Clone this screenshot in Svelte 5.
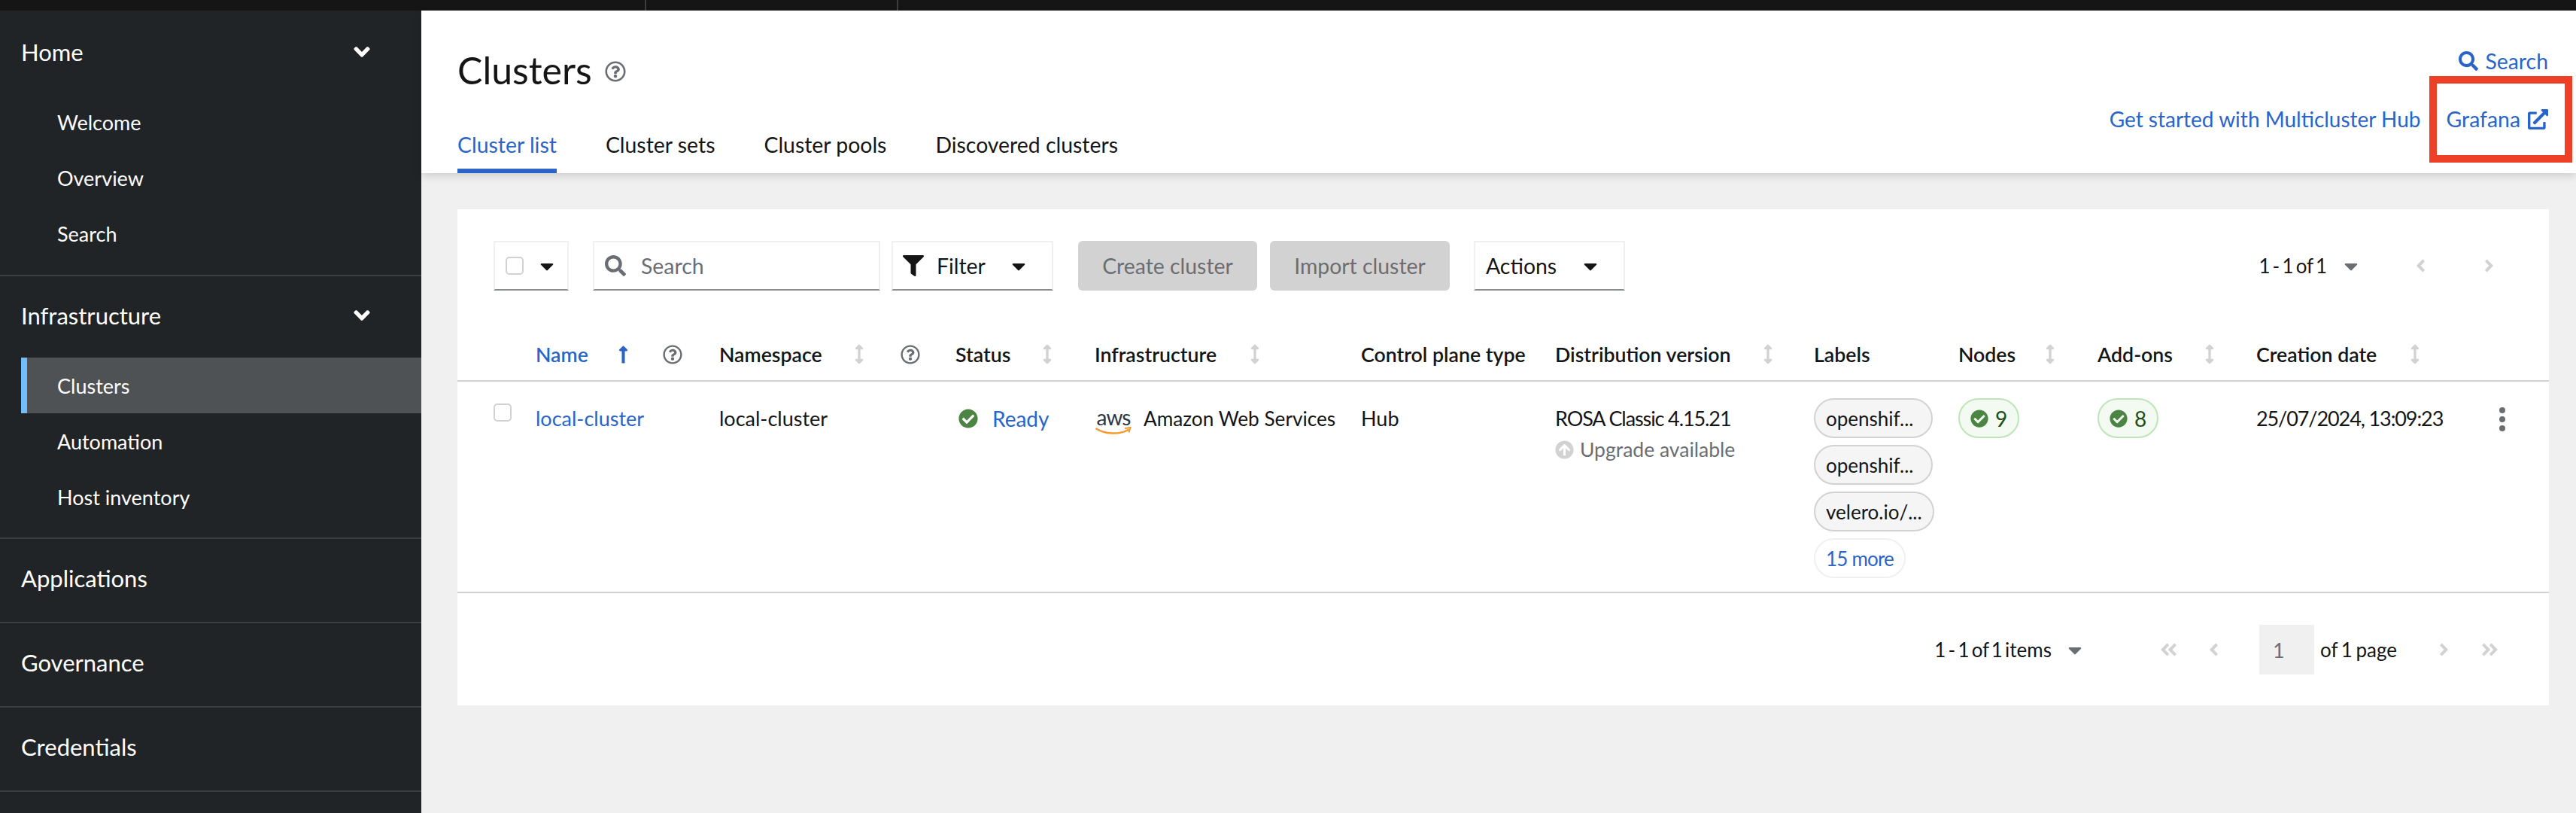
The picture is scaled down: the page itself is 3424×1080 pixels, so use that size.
<script>
  const paths = {
    search: ['0 0 512 512', 'M505 442.7L405.3 343c-4.5-4.5-10.6-7-17-7H372c27.6-35.3 44-79.7 44-128C416 93.1 322.9 0 208 0S0 93.1 0 208s93.1 208 208 208c48.3 0 92.7-16.4 128-44v16.3c0 6.4 2.5 12.5 7 17l99.7 99.7c9.4 9.4 24.6 9.4 33.9 0l28.3-28.3c9.4-9.4 9.4-24.6.1-34zM208 336c-70.7 0-128-57.2-128-128 0-70.7 57.2-128 128-128 70.7 0 128 57.2 128 128 0 70.7-57.2 128-128 128z'],
    filter: ['0 0 512 512', 'M487.976 0H24.028C2.71 0-8.047 25.866 7.058 40.971L192 225.941V432c0 7.831 3.821 15.17 10.237 19.662l80 55.98C298.02 518.69 320 507.493 320 487.98V225.941l184.947-184.97C520.021 25.896 509.338 0 487.976 0z'],
    check: ['0 0 512 512', 'M504 256c0 136.967-111.033 248-248 248S8 392.967 8 256 119.033 8 256 8s248 111.033 248 248zM227.314 387.314l184-184c6.248-6.248 6.248-16.379 0-22.627l-22.627-22.627c-6.248-6.249-16.379-6.249-22.628 0L216 308.118l-70.059-70.059c-6.248-6.248-16.379-6.248-22.628 0l-22.627 22.627c-6.248 6.248-6.248 16.379 0 22.627l104 104c6.249 6.249 16.379 6.249 22.628.001z'],
    external: ['0 0 512 512', 'M432,320H400a16,16,0,0,0-16,16V448H64V128H208a16,16,0,0,0,16-16V80a16,16,0,0,0-16-16H48A48,48,0,0,0,0,112V464a48,48,0,0,0,48,48H400a48,48,0,0,0,48-48V336A16,16,0,0,0,432,320ZM488,0h-128c-21.37,0-32.05,25.91-17,41l35.73,35.73L135,320.37a24,24,0,0,0,0,34L157.67,377a24,24,0,0,0,34,0L435.28,133.32,471,169c15,15,41,4.5,41-17V24A24,24,0,0,0,488,0Z'],
    help: ['0 0 512 512', 'M256 8C119.043 8 8 119.083 8 256c0 136.997 111.043 248 248 248s248-111.003 248-248C504 119.083 392.957 8 256 8zm0 448c-110.532 0-200-89.431-200-200 0-110.495 89.472-200 200-200 110.491 0 200 89.471 200 200 0 110.53-89.431 200-200 200zm107.244-255.2c0 67.052-72.421 68.084-72.421 92.863V300c0 6.627-5.373 12-12 12h-45.647c-6.627 0-12-5.373-12-12v-8.659c0-35.745 27.1-50.034 47.579-61.516 17.561-9.845 28.324-16.541 28.324-29.579 0-17.246-21.999-28.693-39.784-28.693-23.189 0-33.894 10.977-48.942 29.969-4.057 5.12-11.46 6.071-16.666 2.124l-27.824-21.098c-5.107-3.872-6.251-11.066-2.644-16.363C184.846 131.491 214.94 112 261.794 112c49.071 0 101.45 38.304 101.45 88.8zM298 368c0 23.159-18.841 42-42 42s-42-18.841-42-42 18.841-42 42-42 42 18.841 42 42z'],
    angleDown: ['0 0 320 512', 'M143 352.3L7 216.3c-9.4-9.4-9.4-24.6 0-33.9l22.6-22.6c9.4-9.4 24.6-9.4 33.9 0l96.4 96.4 96.4-96.4c9.4-9.4 24.6-9.4 33.9 0l22.6 22.6c9.4 9.4 9.4 24.6 0 33.9l-136 136c-9.2 9.4-24.4 9.4-33.8 0z'],
    angleLeft: ['0 0 256 512', 'M31.7 239l136-136c9.4-9.4 24.6-9.4 33.9 0l22.6 22.6c9.4 9.4 9.4 24.6 0 33.9L127.9 256l96.4 96.4c9.4 9.4 9.4 24.6 0 33.9L201.7 409c-9.4 9.4-24.6 9.4-33.9 0l-136-136c-9.5-9.4-9.5-24.6-.1-34z'],
    anglesLeft: ['0 0 448 512', 'M223.7 239l136-136c9.4-9.4 24.6-9.4 33.9 0l22.6 22.6c9.4 9.4 9.4 24.6 0 33.9L319.9 256l96.4 96.4c9.4 9.4 9.4 24.6 0 33.9L393.7 409c-9.4 9.4-24.6 9.4-33.9 0l-136-136c-9.5-9.4-9.5-24.6-.1-34zm-192 34l136 136c9.4 9.4 24.6 9.4 33.9 0l22.6-22.6c9.4-9.4 9.4-24.6 0-33.9L127.9 256l96.4-96.4c9.4-9.4 9.4-24.6 0-33.9L201.7 103c-9.4-9.4-24.6-9.4-33.9 0l-136 136c-9.5 9.4-9.5 24.6-.1 34z'],
    caret: ['0 0 320 512', 'M31.3 192h257.3c17.8 0 26.7 21.5 14.1 34.1L174.1 354.8c-7.8 7.8-20.5 7.8-28.3 0L17.2 226.1C4.6 213.5 13.5 192 31.3 192z'],
    sortBoth: ['0 0 272 512', 'M214.059 377.941H168V134.059h46.059c21.382 0 32.09-25.851 16.971-40.971L152.971 15.029c-9.373-9.373-24.569-9.373-33.941 0L40.971 93.088c-15.119 15.119-4.411 40.971 16.971 40.971H104v243.882H57.941c-21.382 0-32.09 25.851-16.971 40.971l78.059 78.059c9.373 9.373 24.569 9.373 33.941 0l78.059-78.059c15.119-15.12 4.411-40.971-16.97-40.971z'],
    sortUp: ['0 0 256 512', 'M88 166.059V468c0 6.627 5.373 12 12 12h56c6.627 0 12-5.373 12-12V166.059h46.059c21.382 0 32.09-25.851 16.971-40.971l-86.059-86.059c-9.373-9.373-24.569-9.373-33.941 0l-86.059 86.059c-15.119 15.119-4.411 40.971 16.971 40.971H88z'],
    upgrade: ['0 0 512 512', 'M8 256C8 119 119 8 256 8s248 111 248 248-111 248-248 248S8 393 8 256zm143.6 28.9l72.4-75.5V392c0 13.3 10.7 24 24 24h16c13.3 0 24-10.7 24-24V209.4l72.4 75.5c9.3 9.7 24.8 9.9 34.3.4l10.9-11c9.4-9.4 9.4-24.6 0-33.9L273 107.7c-9.4-9.4-24.6-9.4-33.9 0L106.3 240.4c-9.4 9.4-9.4 24.6 0 33.9l10.9 11c9.6 9.5 25.1 9.3 34.4-.4z']
  };

  const nav = [
    { title: 'Home', items: ['Welcome', 'Overview', 'Search'] },
    { title: 'Infrastructure', items: ['Clusters', 'Automation', 'Host inventory'] },
    { title: 'Applications' },
    { title: 'Governance' },
    { title: 'Credentials' }
  ];
  const tabs = ['Cluster list', 'Cluster sets', 'Cluster pools', 'Discovered clusters'];
  const labels = ['openshif...', 'openshif...', 'velero.io/...'];
</script>

{#snippet icon(name, cls)}
  <svg class="icon {cls}" viewBox={paths[name][0]} fill="currentColor" aria-hidden="true"><path d={paths[name][1]} /></svg>
{/snippet}

<div class="page">
  <div class="topbar"><span class="seg first"></span><span class="seg second"></span></div>
  <div class="shell">
    <nav class="sidebar">
      {#each nav as section}
        <div class="section">
          <div class="section-title">
            <span>{section.title}</span>
            {#if section.items}{@render icon('angleDown', 'chev')}{/if}
          </div>
          {#if section.items}
            <ul>
              {#each section.items as item}
                <li class:active={item === 'Clusters'}>{item}</li>
              {/each}
            </ul>
          {/if}
        </div>
      {/each}
    </nav>

    <main>
      <header>
        <div class="head-left">
          <h1>Clusters {@render icon('help', 'title-help')}</h1>
          <div class="tabs">
            {#each tabs as tab, i}
              <span class="tab" class:current={i === 0}>{tab}</span>
            {/each}
          </div>
        </div>
        <div class="head-right">
          <span class="link search-link">{@render icon('search', 'link-search')}Search</span>
          <div class="link-row">
            <span class="link started">Get started with Multicluster Hub</span>
            <span class="link grafana">Grafana{@render icon('external', 'link-ext')}</span>
          </div>
        </div>
        <div class="callout"></div>
      </header>

      <div class="content">
        <section class="card">
          <div class="toolbar">
            <div class="control bulk"><span class="box"></span>{@render icon('caret', 'caret')}</div>
            <div class="control search">{@render icon('search', 'search-ico')}<span>Search</span></div>
            <div class="control filter">{@render icon('filter', 'filter-ico')}<span>Filter</span>{@render icon('caret', 'caret')}</div>
            <div class="btn create">Create cluster</div>
            <div class="btn import">Import cluster</div>
            <div class="control actions"><span>Actions</span>{@render icon('caret', 'caret')}</div>
            <div class="pager-top">
              <span class="tight">1 - 1 of 1</span>
              {@render icon('caret', 'caret muted')}
              {@render icon('angleLeft', 'pg prev')}
              {@render icon('angleLeft', 'pg flip next')}
            </div>
          </div>

          <div class="row head">
            <div></div>
            <div class="th sorted">Name{@render icon('sortUp', 'sort-up')}<span class="help-name">{@render icon('help', 'th-help')}</span></div>
            <div class="th">Namespace{@render icon('sortBoth', 'sort')}{@render icon('help', 'th-help ns-help')}</div>
            <div class="th">Status{@render icon('sortBoth', 'sort')}</div>
            <div class="th">Infrastructure{@render icon('sortBoth', 'sort wide')}</div>
            <div class="th">Control plane type</div>
            <div class="th">Distribution version{@render icon('sortBoth', 'sort')}</div>
            <div class="th">Labels</div>
            <div class="th">Nodes{@render icon('sortBoth', 'sort nodes')}</div>
            <div class="th">Add-ons{@render icon('sortBoth', 'sort')}</div>
            <div class="th">Creation date{@render icon('sortBoth', 'sort wide')}</div>
            <div></div>
          </div>

          <div class="row body">
            <div class="cell-box"><span class="box"></span></div>
            <div class="td link">local-cluster</div>
            <div class="td">local-cluster</div>
            <div class="td status">{@render icon('check', 'ok')}<span class="link">Ready</span></div>
            <div class="td infra">
              <div class="aws">
                <span>aws</span>
                <svg viewBox="0 0 50 12" aria-hidden="true">
                  <path d="M1.500 2c12 8 31 9 44 1.500" fill="none" stroke="#f49a2b" stroke-width="2.500" />
                  <path d="M40 2l7.500-1-2 6.500" fill="none" stroke="#f49a2b" stroke-width="2" />
                </svg>
              </div>
              <span>Amazon Web Services</span>
            </div>
            <div class="td">Hub</div>
            <div class="td">
              <div class="digits">ROSA Classic 4.15.21</div>
              <div class="upgrade">{@render icon('upgrade', 'up')}Upgrade available</div>
            </div>
            <div class="pills">
              {#each labels as label}
                <span class="pill">{label}</span>
              {/each}
              <span class="pill more">15 more</span>
            </div>
            <div class="pills"><span class="pill good">{@render icon('check', 'good-ico')}9</span></div>
            <div class="pills"><span class="pill good">{@render icon('check', 'good-ico')}8</span></div>
            <div class="td digits">25/07/2024, 13:09:23</div>
            <div class="kebab"><i></i><i></i><i></i></div>
          </div>

          <div class="pager-bottom">
            <span class="count tight">1 - 1 of 1 items</span>
            {@render icon('caret', 'caret muted')}
            {@render icon('anglesLeft', 'pg first')}
            {@render icon('angleLeft', 'pg back')}
            <span class="page-input">1</span>
            <span class="of">of 1 page</span>
            {@render icon('angleLeft', 'pg flip fwd')}
            {@render icon('anglesLeft', 'pg flip last')}
          </div>
        </section>
      </div>
    </main>
  </div>
</div>

<style>
  :global(body) {
    margin: 0;
    background: #f0f0f0;
  }

  .page {
    width: 3424px;
    height: 1080px;
    overflow: hidden;
    display: flex;
    flex-direction: column;
    font-family: Lato, "Liberation Sans", sans-serif;
    font-size: 27px;
    color: #151515;
  }

  .icon {
    display: block;
    flex: none;
  }

  .topbar {
    height: 14px;
    flex: none;
    display: flex;
    background: #151515;
  }

  .seg {
    border-right: 2px solid #3c3f42;
  }

  .seg.first {
    width: 753px;
  }

  .seg.second {
    width: 333px;
  }

  .shell {
    flex: 1;
    display: flex;
    min-height: 0;
  }

  /* sidebar */
  .sidebar {
    width: 560px;
    flex: none;
    padding-top: 3px;
    background: #212427;
    color: #fff;
  }

  .section {
    padding-bottom: 6px;
    border-bottom: 2px solid #3c3f42;
  }

  .section:nth-child(2) {
    padding-bottom: 17px;
  }

  .section:first-child {
    padding-bottom: 18px;
  }

  .section-title {
    height: 104px;
    padding: 0 68px 0 28px;
    display: flex;
    align-items: center;
    justify-content: space-between;
    font-size: 31px;
  }

  .chev {
    width: 22px;
    height: 34px;
  }

  ul {
    list-style: none;
    margin: 4px 0 0;
    padding: 0;
  }

  li {
    height: 74px;
    margin-left: 28px;
    padding-left: 48px;
    display: flex;
    align-items: center;
  }

  li.active {
    padding-left: 40px;
    background: #4f5255;
    border-left: 8px solid #73bcf7;
  }

  /* header */
  main {
    flex: 1;
    min-width: 0;
    display: flex;
    flex-direction: column;
  }

  header {
    position: relative;
    z-index: 1;
    height: 216px;
    flex: none;
    display: flex;
    justify-content: space-between;
    padding: 0 37px 0 48px;
    background: #fff;
    box-shadow: 0 4px 10px rgba(3, 3, 3, 0.14);
    font-size: 28.4px;
  }

  h1 {
    display: flex;
    align-items: center;
    gap: 17px;
    margin: 50px 0 32px;
    height: 58px;
    font-size: 50px;
    font-weight: 400;
  }

  .title-help {
    width: 28px;
    height: 28px;
    color: #6a6e73;
    margin-top: 4px;
  }

  .tabs {
    display: flex;
    gap: 65px;
  }

  .tab {
    height: 76px;
    box-sizing: border-box;
    display: flex;
    align-items: center;
    border-bottom: 6px solid transparent;
    padding-top: 6px;
  }

  .tab.current {
    color: #2b64c8;
    border-bottom-color: #2b64c8;
  }

  .link {
    color: #2b64c8;
  }

  .head-right {
    display: flex;
    flex-direction: column;
    align-items: flex-end;
    padding-top: 47px;
    gap: 37px;
  }

  .search-link {
    height: 40px;
    display: flex;
    align-items: center;
    gap: 9px;
  }

  .link-search {
    width: 26px;
    height: 26px;
  }

  .link-row {
    height: 40px;
    display: flex;
    align-items: center;
    gap: 34px;
  }

  .started {
    font-size: 28px;
  }

  .grafana {
    display: flex;
    align-items: center;
    gap: 10px;
  }

  .link-ext {
    width: 27px;
    height: 27px;
  }

  .callout {
    position: absolute;
    right: 5px;
    top: 87px;
    width: 190px;
    height: 115px;
    box-sizing: border-box;
    border: 10px solid #ee4026;
  }

  /* card */
  .content {
    flex: 1;
    padding: 48px 36px 0 48px;
    background: #f0f0f0;
  }

  .card {
    height: 659px;
    background: #fff;
  }

  .toolbar {
    display: flex;
    align-items: stretch;
    height: 66px;
    padding: 42px 73px 0 48px;
    font-size: 28.4px;
  }

  .control {
    box-sizing: border-box;
    display: flex;
    align-items: center;
    border: 2px solid #f0f0f0;
    border-bottom-color: #8a8d90;
  }

  .box {
    display: block;
    box-sizing: border-box;
    width: 24px;
    height: 24px;
    border: 2px solid #d2d2d2;
    border-radius: 5px;
    background: #fff;
  }

  .caret {
    width: 18px;
    height: 29px;
  }

  .muted {
    color: #6a6e73;
  }

  .bulk {
    width: 100px;
    padding-left: 14px;
    gap: 22px;
  }

  .search {
    width: 382px;
    margin-left: 32px;
    padding-left: 14px;
    gap: 20px;
    color: #6a6e73;
  }

  .search-ico {
    width: 28px;
    height: 28px;
  }

  .filter {
    width: 215px;
    margin-left: 15px;
    padding-left: 13px;
  }

  .filter-ico {
    width: 28px;
    height: 28px;
  }

  .filter span {
    width: 100px;
    margin-left: 17px;
  }

  .btn {
    margin-left: 17px;
    display: flex;
    align-items: center;
    justify-content: center;
    background: #d2d2d2;
    color: #6a6e73;
    border-radius: 6px;
  }

  .create {
    width: 238px;
    margin-left: 33px;
  }

  .import {
    width: 239px;
  }

  .actions {
    width: 201px;
    margin-left: 32px;
    padding-left: 14px;
  }

  .actions span {
    width: 130px;
  }

  .pager-top {
    margin-left: auto;
    display: flex;
    align-items: center;
    font-size: 26px;
  }

  .tight {
    font-size: 26px;
    word-spacing: -3.5px;
  }

  .pager-top .caret {
    margin-left: 23px;
  }

  .pg {
    color: #d2d2d2;
    height: 26px;
    width: 13px;
  }

  .flip {
    transform: scaleX(-1);
  }

  .prev {
    margin-left: 77px;
  }

  .next {
    margin-left: 78px;
  }

  /* table */
  .row {
    display: grid;
    grid-template-columns: 56px 244px 314px 185px 354px 258px 344px 192px 185px 211px 301px 1fr;
    padding-left: 48px;
  }

  .head {
    box-sizing: border-box;
    height: 121px;
    padding-top: 50px;
    border-bottom: 2px solid #d2d2d2;
    align-items: center;
  }

  .th {
    display: flex;
    align-items: center;
    font-size: 26.7px;
    font-weight: 600;
    white-space: nowrap;
  }

  .sorted {
    color: #2b64c8;
  }

  .sort-up {
    width: 13px;
    height: 26px;
    margin-left: 40px;
  }

  .help-name {
    margin-left: 46px;
    color: #151515;
  }

  .th-help {
    width: 26px;
    height: 26px;
    color: #6a6e73;
  }

  .ns-help {
    margin-left: 48px;
  }

  .sort {
    width: 14px;
    height: 27px;
    color: #d2d2d2;
    margin-left: 42px;
  }

  .sort.wide {
    margin-left: 44px;
  }

  .sort.nodes {
    margin-left: 39px;
  }

  .body {
    box-sizing: border-box;
    height: 281px;
    border-bottom: 2px solid #d2d2d2;
    align-items: start;
    white-space: nowrap;
  }

  .cell-box {
    padding-top: 29px;
  }

  .td {
    margin-top: 29px;
    line-height: 40px;
  }

  .digits {
    letter-spacing: -1.1px;
  }

  .status {
    display: flex;
    align-items: center;
    padding-left: 4px;
    font-size: 28px;
  }

  .ok {
    width: 26px;
    height: 26px;
    color: #4c8443;
    margin-right: 19px;
  }

  .infra {
    display: flex;
    align-items: center;
    gap: 15px;
    font-size: 26.2px;
  }

  .aws {
    width: 50px;
    flex: none;
    margin: 5px 0 -3px;
    display: flex;
    flex-direction: column;
    align-items: center;
    font-size: 28px;
    line-height: 26px;
    letter-spacing: -1px;
    color: #2b3648;
  }

  .aws svg {
    display: block;
    width: 50px;
    height: 12px;
  }

  .upgrade {
    display: flex;
    align-items: center;
    gap: 8px;
    margin-top: 1px;
    color: #6a6e73;
    font-size: 26.5px;
    letter-spacing: 0;
  }

  .up {
    width: 25px;
    height: 25px;
    color: #d2d2d2;
  }

  .pills {
    padding-top: 22px;
    display: flex;
    flex-direction: column;
    align-items: flex-start;
    gap: 9px;
  }

  .pill {
    box-sizing: border-box;
    height: 53px;
    padding: 0 14px;
    min-width: 158px;
    display: flex;
    align-items: center;
    border: 2px solid #d2d2d2;
    border-radius: 27px;
    background: #f5f5f5;
    font-size: 26px;
  }

  .more {
    min-width: 119px;
    background: #fff;
    border-color: #f0f0f0;
    color: #2b64c8;
    letter-spacing: -0.8px;
  }

  .good {
    min-width: 80px;
    background: #f3faf2;
    border-color: #bde5b8;
    color: #1e4f18;
    gap: 9px;
    font-size: 28px;
  }

  .good-ico {
    width: 24px;
    height: 24px;
    color: #4c8443;
  }

  .kebab {
    padding: 34px 0 0 22px;
    display: flex;
    flex-direction: column;
    gap: 4px;
  }

  .kebab i {
    display: block;
    width: 8px;
    height: 8px;
    border-radius: 50%;
    background: #6a6e73;
  }

  /* bottom pagination */
  .pager-bottom {
    display: flex;
    align-items: center;
    justify-content: flex-end;
    height: 66px;
    padding: 42px 67px 0 0;
  }

  .count {
    margin-right: 22px;
  }

  .first {
    width: 23px;
    margin-left: 104px;
  }

  .back {
    margin-left: 42px;
  }

  .page-input {
    box-sizing: border-box;
    width: 73px;
    height: 66px;
    margin-left: 54px;
    padding-left: 18px;
    display: flex;
    align-items: center;
    background: #f0f0f0;
    color: #6a6e73;
  }

  .of {
    margin-left: 8px;
    font-size: 26px;
    word-spacing: -2px;
  }

  .fwd {
    margin-left: 56px;
  }

  .last {
    width: 23px;
    margin-left: 43px;
  }
</style>
